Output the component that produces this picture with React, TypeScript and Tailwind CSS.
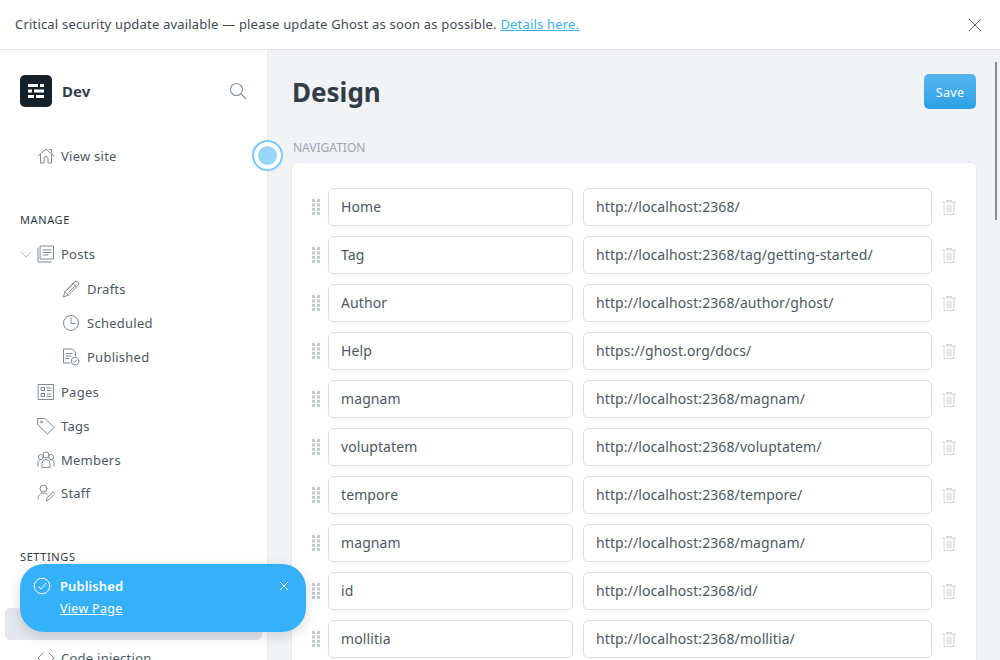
import type { ReactNode } from "react";

const navRows = [
  ["Home", "http://localhost:2368/"],
  ["Tag", "http://localhost:2368/tag/getting-started/"],
  ["Author", "http://localhost:2368/author/ghost/"],
  ["Help", "https://ghost.org/docs/"],
  ["magnam", "http://localhost:2368/magnam/"],
  ["voluptatem", "http://localhost:2368/voluptatem/"],
  ["tempore", "http://localhost:2368/tempore/"],
  ["magnam", "http://localhost:2368/magnam/"],
  ["id", "http://localhost:2368/id/"],
  ["mollitia", "http://localhost:2368/mollitia/"],
];

function Icon({ children, size = 18 }: { children: ReactNode; size?: number }) {
  return (
    <svg
      width={size}
      height={size}
      viewBox="0 0 18 18"
      fill="none"
      stroke="#7c8b96"
      strokeWidth="1"
      strokeLinecap="round"
      strokeLinejoin="round"
      className="shrink-0"
    >
      {children}
    </svg>
  );
}

function SideItem({
  icon,
  label,
  className,
  sub,
}: {
  icon: ReactNode;
  label: string;
  className: string;
  sub?: boolean;
}) {
  return (
    <div className={`flex items-center text-[13px] leading-[20px] tracking-[0.25px] text-[#4b5963] ${sub ? "gap-[7px] pl-[62px]" : "gap-[6px] pl-[37px]"} ${className}`}>
      {icon}
      <span>{label}</span>
    </div>
  );
}

function DragHandle() {
  return (
    <svg width="8" height="16" viewBox="0 0 8 16" fill="#c0cad1" className="shrink-0">
      {[0, 4.4, 8.8, 13].map((y) => (
        <g key={y}>
          <rect x="0" y={y} width="3" height="3" />
          <rect x="5" y={y} width="3" height="3" />
        </g>
      ))}
    </svg>
  );
}

function TrashIcon() {
  return (
    <svg width="14" height="15" viewBox="0 0 14 15" fill="none" stroke="#cfd6db" strokeWidth="1" className="shrink-0">
      <path d="M0 2h14" />
      <path d="M4.500 2V.5h5V2" />
      <path d="M2 2v12.500h10V2" />
      <path d="M5 4.500v8M7 4.500v8M9 4.500v8" />
    </svg>
  );
}

const inputClass =
  "h-[38px] rounded-[5px] border border-[#d5e1ea] bg-white px-3 pb-px text-[14px] text-[#4b5963] tracking-[0.1px] outline-none";

export default function App() {
  return (
    <div className="relative flex h-[660px] w-[1000px] flex-col overflow-hidden bg-white font-['Noto_Sans',sans-serif]">
      <div className="flex h-[50px] shrink-0 items-center justify-between border-b border-[#e3e5e8] pl-[15px] pr-[18px] text-[13px] tracking-[0.19px] text-[#3f4b55]">
        <p className="pt-px">
          Critical security update available — please update Ghost as soon as possible.{" "}
          <span className="text-[#3eb0ef] underline">Details here.</span>
        </p>
        <svg width="14" height="14" viewBox="0 0 14 14" stroke="#5b6670" strokeWidth="1">
          <path d="M1 1l12 12M13 1L1 13" />
        </svg>
      </div>

      <div className="flex min-h-0 flex-1">
        <aside className="relative flex w-[268px] shrink-0 flex-col overflow-hidden border-r border-[#e6e9ee] bg-white">
          <div className="mt-[25px] flex items-center pl-5 pr-5">
            <div className="flex h-8 w-8 items-center justify-center rounded-[5px] bg-[#15212a]">
              <svg width="16" height="14" viewBox="0 0 16 14" fill="#ffffff">
                <rect x="0" y="0" width="10" height="3" />
                <rect x="12" y="0" width="4" height="3" />
                <rect x="0" y="5.500" width="4" height="3" />
                <rect x="6" y="5.500" width="10" height="3" />
                <rect x="0" y="11" width="6" height="3" />
                <rect x="8" y="11" width="8" height="3" />
              </svg>
            </div>
            <span className="ml-[10px] flex-1 text-[15px] font-bold text-[#323e47]">Dev</span>
            <svg width="18" height="18" viewBox="0 0 18 18" fill="none" stroke="#7c95a3" strokeWidth="1.1">
              <circle cx="7.500" cy="7.500" r="6" />
              <path d="M12 12l5 5" />
            </svg>
          </div>

          <SideItem
            className="mt-[39px]"
            label="View site"
            icon={
              <Icon>
                <path d="M1 9l8-7 8 7M3.500 7.500V16H7v-4.500a2 2 0 0 1 4 0V16h3.500V7.500M12.500 2.500h2v3" />
              </Icon>
            }
          />

          <div className="mt-[46px] pl-5 text-[11px] leading-[16px] tracking-[0.6px] text-[#2f3b44]">MANAGE</div>

          <div className="relative mt-[16px]">
            <svg width="12" height="7" viewBox="0 0 12 7" fill="none" stroke="#b0bac2" className="absolute left-[20px] top-[7px]">
              <path d="M1 1l5 5 5-5" />
            </svg>
            <SideItem
              className=""
              label="Posts"
              icon={
                <Icon>
                  <path d="M3.500 1h13v13h-13zM1 3v14h13M6 5h8M6 7.500h8M6 10h5" />
                </Icon>
              }
            />
          </div>
          <SideItem
            sub
            className="mt-[15px]"
            label="Drafts"
            icon={
              <Icon>
                <path d="M1.500 16.500l1.500-5L12.500 2a1.800 1.800 0 0 1 3.500 3.500L6.500 15zM3 11.500L6.500 15M11 3.500L14.500 7M5 10l7-7M7 12l7-7" />
              </Icon>
            }
          />
          <SideItem
            sub
            className="mt-[14px]"
            label="Scheduled"
            icon={
              <Icon>
                <circle cx="9" cy="9" r="7.500" />
                <path d="M9 4v5.500h4" />
              </Icon>
            }
          />
          <SideItem
            sub
            className="mt-[14px]"
            label="Published"
            icon={
              <Icon>
                <path d="M8 15H1.500V1h9l3 3v4M4 5.500h6M4 8h5M4 10.500h3" />
                <circle cx="13" cy="13" r="3.800" />
                <path d="M11.300 13l1.300 1.300 2.200-2.300" />
              </Icon>
            }
          />
          <SideItem
            className="mt-[15px]"
            label="Pages"
            icon={
              <Icon>
                <rect x="1.500" y="1.500" width="15" height="15" />
                <path d="M4.500 4.500h3v3h-3zM4.500 10.500h3v3h-3zM10 5h4M10 7.500h4M10 11h4M10 13.500h4" />
              </Icon>
            }
          />
          <SideItem
            className="mt-[14px]"
            label="Tags"
            icon={
              <Icon>
                <path d="M1 1.500h7l9 9-6.500 6.500-9.500-9z" />
                <circle cx="4.500" cy="5" r="1" />
              </Icon>
            }
          />
          <SideItem
            className="mt-[14px]"
            label="Members"
            icon={
              <Icon>
                <circle cx="9" cy="4" r="3" />
                <circle cx="3.800" cy="6" r="2.500" />
                <circle cx="14.200" cy="6" r="2.500" />
                <path d="M5 16v-3.500a4 4 0 0 1 8 0V16zM1 15v-3.500a3 3 0 0 1 3.500-2.800M17 15v-3.500a3 3 0 0 0-3.500-2.800" />
              </Icon>
            }
          />
          <SideItem
            className="mt-[13px]"
            label="Staff"
            icon={
              <Icon>
                <circle cx="6.500" cy="4.500" r="3.500" />
                <path d="M1 15c0-4 2.500-6 5.500-6 1.500 0 2.800.5 3.800 1.400M9.500 16.500l.7-3 5-5a1.300 1.300 0 0 1 2 2l-5 5z" />
              </Icon>
            }
          />

          <div className="mt-[46px] pl-5 text-[11px] leading-[16px] tracking-[0.6px] text-[#2f3b44]">SETTINGS</div>
          {/* the toast covers the General row; only the active row's edges show */}
          <div className="ml-[5px] mt-[43px] flex h-[32px] w-[257px] shrink-0 items-center gap-[6px] rounded-[5px] bg-[#e3e7ee] pl-[32px] text-[13px] tracking-[0.25px] text-[#4b5963]">
            <Icon>
              <circle cx="9" cy="9" r="7.500" />
            </Icon>
            <span>Design</span>
          </div>
          <SideItem
            className="mt-[8px]"
            label="Code injection"
            icon={
              <Icon>
                <path d="M6 4L1 9l5 5M12 4l5 5-5 5" />
              </Icon>
            }
          />
        </aside>

        <main className="min-w-0 flex-1 overflow-hidden bg-[#f1f3f7] pl-6 pr-6">
          <div className="mt-6 flex items-center justify-between">
            <h1 className="text-[26px] font-bold leading-[34px] text-[#323e47]">Design</h1>
            <button
              type="button"
              className="h-[35px] w-[52px] rounded-[5px] bg-gradient-to-b from-[#56b6f0] to-[#2aa0e6] pt-1 text-[12.500px] tracking-[0.3px] text-white"
            >
              Save
            </button>
          </div>
          <div className="mt-[31px] pl-px text-[12px] leading-[16px] text-[#9aa8b3]">NAVIGATION</div>
          <div className="mt-[7px] flex flex-col gap-[10px] rounded-[5px] bg-white pb-6 pl-5 pr-[19px] pt-[25px] shadow-[0_0_2px_rgba(130,145,165,0.25)]">
            {navRows.map(([label, url], index) => (
              <div key={index} className="flex items-center">
                <DragHandle />
                <input readOnly value={label} className={`${inputClass} ml-2 w-[245px]`} />
                <input readOnly value={url} className={`${inputClass} ml-[10px] w-[349px]`} />
                <span className="ml-[10px]">
                  <TrashIcon />
                </span>
              </div>
            ))}
          </div>
        </main>
      </div>

      {/* pulse marker over the sidebar edge */}
      <div className="absolute left-[252px] top-[140px] flex h-[31px] w-[31px] items-center justify-center rounded-full border-2 border-[#7fcbf7] bg-white">
        <div className="h-[19px] w-[19px] rounded-full bg-[#9ad6f8]" />
      </div>

      {/* overlay scrollbar */}
      <div className="absolute left-[995px] top-[62px] h-[158px] w-[2px] bg-[#8b8d90]" />

      <div className="absolute left-[20px] top-[564px] flex h-[68px] w-[286px] rounded-[24px] bg-[#35b1f9] pl-[13px] pr-[17px] pt-[12px] text-white shadow-[0_4px_14px_rgba(0,0,0,0.14)]">
        <svg width="18" height="18" viewBox="0 0 18 18" fill="none" stroke="#ffffff" strokeWidth="1" className="mt-[1px] shrink-0">
          <circle cx="9" cy="9" r="7.800" />
          <path d="M5.500 9.500l2.500 2.500 5-6" />
        </svg>
        <div className="ml-[9px] flex-1">
          <div className="text-[13px] font-semibold leading-[20px] tracking-[0.1px]">Published</div>
          <div className="mt-[4px] text-[12.500px] leading-[18px] tracking-[0.3px] underline">View Page</div>
        </div>
        <svg width="10" height="10" viewBox="0 0 10 10" stroke="#ffffff" strokeWidth="1" className="mt-[5px]">
          <path d="M1 1l8 8M9 1L1 9" />
        </svg>
      </div>
    </div>
  );
}
